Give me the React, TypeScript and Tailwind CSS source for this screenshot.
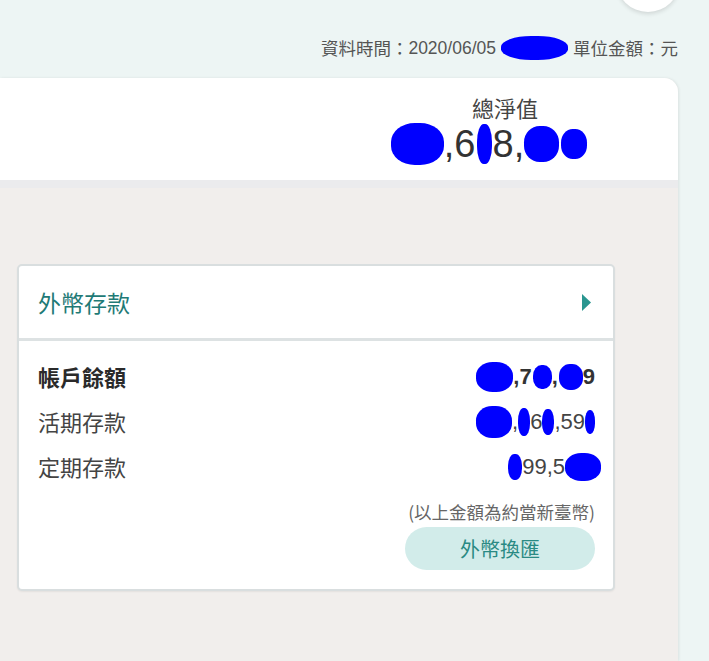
import React from "react";

const cjk = '"Noto Sans CJK TC", "Noto Sans", sans-serif';
const num = '"Liberation Sans", Arial, sans-serif';

function Blob({ w, h, className = "" }: { w: number; h: number; className?: string }) {
  return (
    <span
      className={`inline-block bg-[#0000ff] rounded-[45%] align-middle ${className}`}
      style={{ width: w, height: h }}
    />
  );
}

export default function App() {
  return (
    <div className="relative w-[709px] h-[661px] overflow-hidden bg-[#edf5f4]" style={{ fontFamily: cjk }}>
      {/* top circle */}
      <div className="absolute left-[616px] top-[-52px] w-[64px] h-[64px] rounded-full bg-white shadow-[0_2px_4px_rgba(0,0,0,0.12)]" />

      {/* date line */}
      <div className="h-[78px] flex items-end justify-end pr-[31px] pb-[18px]">
        <div className="flex items-center text-[17.5px] leading-[20px] text-[#555]">
          <span>資料時間：</span>
          <span style={{ fontFamily: num }}>2020/06/05</span>
          <Blob w={67} h={24} className="mx-[5px] rounded-[40%]" />
          <span>單位金額：元</span>
        </div>
      </div>

      {/* main panel */}
      <div className="w-[678px] h-[583px] rounded-tr-[14px] bg-[#f1eeec] overflow-hidden shadow-[1px_0_3px_rgba(0,0,0,0.08)] flex flex-col">
        <div className="h-[102px] bg-white flex">
          <div className="ml-[380px] w-[250px] flex flex-col items-center pt-[15px]">
            <div className="text-[22px] leading-[28px] text-[#444]">總淨值</div>
            <div
              className="flex items-center text-[38px] leading-[46px] text-[#333] -ml-[32px]"
              style={{ fontFamily: num }}
            >
              <Blob w={53} h={42} className="rounded-[30%]" />
              <span>,6</span>
              <Blob w={15} h={40} className="mx-[1px]" />
              <span>8,</span>
              <Blob w={35} h={36} />
              <Blob w={26} h={30} className="ml-[2px]" />
            </div>
          </div>
        </div>
        <div className="h-[8px] bg-[#ebebed]" />

        <div className="pl-[17px] pt-[76px]">
          <div className="w-[598px] bg-white border-2 border-[#d9dedf] rounded-[5px] shadow-[0_1px_2px_rgba(0,0,0,0.06)]">
            <div className="h-[72px] flex items-center justify-between pl-[19px] pr-[22px]">
              <span className="text-[23px] leading-[30px] text-[#1f7a76]">外幣存款</span>
              <svg width="9" height="17" viewBox="0 0 9 17">
                <polygon points="0,0 9,8.5 0,17" fill="#2a9690" />
              </svg>
            </div>
            <div className="h-[3px] bg-[#dde2e3]" />
            <div className="pt-[13px] pb-[19px] pl-[19px] pr-[18px] flex flex-col">
              <div className="h-[45px] flex items-center justify-between">
                <span className="text-[22px] font-bold text-[#2a2a2a]">帳戶餘額</span>
                <span className="flex items-center text-[22px] font-bold text-[#333]" style={{ fontFamily: num }}>
                  <Blob w={37} h={30} />
                  <span>,7</span>
                  <Blob w={19} h={24} className="ml-[1px]" />
                  <span>,</span>
                  <Blob w={24} h={26} className="ml-[1px]" />
                  <span>9</span>
                </span>
              </div>
              <div className="h-[45px] flex items-center justify-between">
                <span className="text-[22px] text-[#444]">活期存款</span>
                <span className="flex items-center text-[22px] text-[#444]" style={{ fontFamily: num }}>
                  <Blob w={36} h={32} />
                  <span>,</span>
                  <Blob w={12} h={28} />
                  <span>6</span>
                  <Blob w={12} h={26} />
                  <span>,59</span>
                  <Blob w={10} h={24} />
                </span>
              </div>
              <div className="h-[45px] flex items-center justify-between">
                <span className="text-[22px] text-[#444]">定期存款</span>
                <span className="flex items-center text-[22px] text-[#444] mr-[-6px]" style={{ fontFamily: num }}>
                  <Blob w={14} h={26} />
                  <span>99,5</span>
                  <Blob w={36} h={28} />
                </span>
              </div>
              <div className="mt-[11px] self-end text-[17.5px] leading-[24px] text-[#666]">(以上金額為約當新臺幣)</div>
              <div className="mt-[3px] self-end w-[190px] h-[43px] rounded-full bg-[#d2ecea] flex items-center justify-center text-[20px] text-[#2a8a84]">
                外幣換匯
              </div>
            </div>
          </div>
        </div>
      </div>
    </div>
  );
}
